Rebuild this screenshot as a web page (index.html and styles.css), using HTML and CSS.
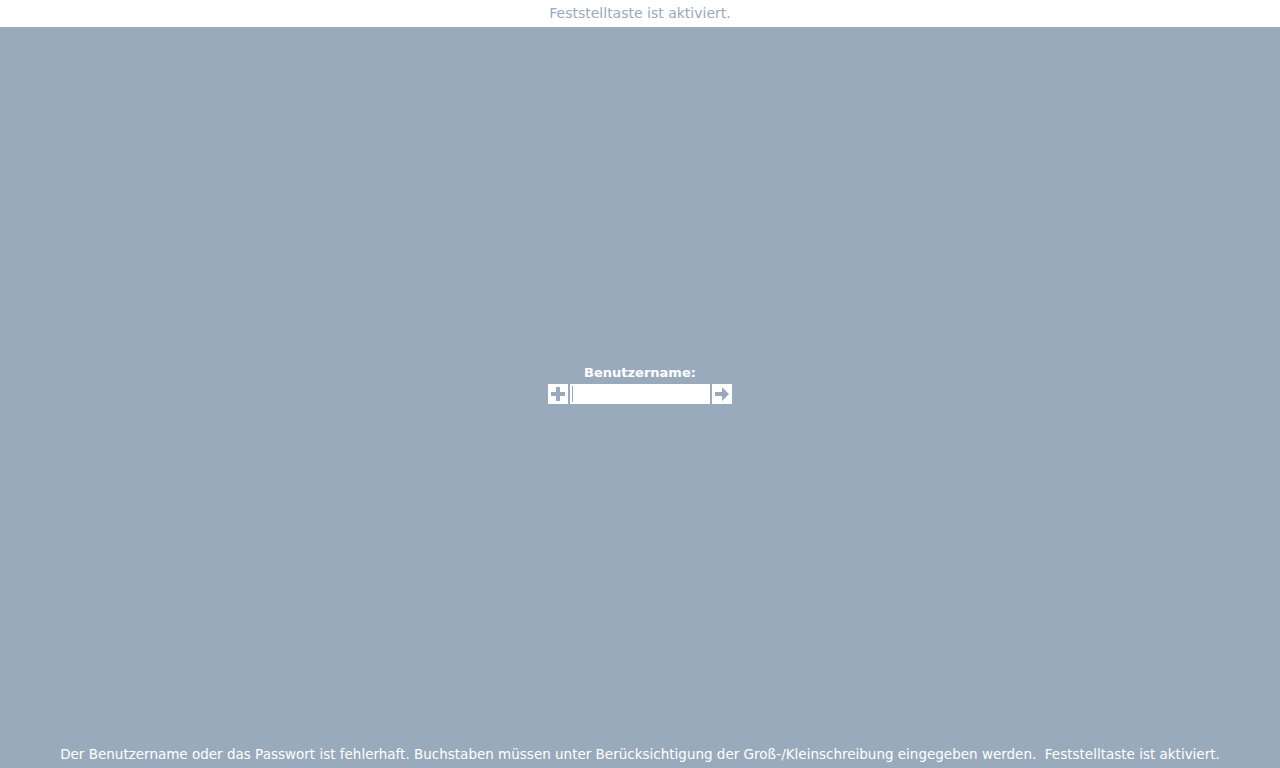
FILE: index.html
```html
<!DOCTYPE html>
<html lang="de">
<head>
<meta charset="utf-8">
<title>Anmeldung</title>
<link rel="stylesheet" href="styles.css">
</head>
<body>
<div class="page">
  <div class="topbar">Feststelltaste ist aktiviert.</div>
  <div class="main">
    <div class="login">
      <div class="label">Benutzername:</div>
      <div class="row">
        <button class="btn" type="button" aria-label="Optionen">
          <svg width="20" height="20" viewBox="0 0 20 20"><path d="M8 3h4v5h5v4h-5v5h-4v-5h-5v-4h5z" fill="#9aaabd"/></svg>
        </button>
        <div class="input"><span class="caret"></span></div>
        <button class="btn" type="button" aria-label="Weiter">
          <svg width="20" height="20" viewBox="0 0 20 20"><path d="M3 8h7v-5l7 7-7 7v-5h-7z" fill="#9aaabd"/></svg>
        </button>
      </div>
    </div>
  </div>
  <div class="message">Der Benutzername oder das Passwort ist fehlerhaft. Buchstaben müssen unter Berücksichtigung der Groß-/Kleinschreibung eingegeben werden.&nbsp; Feststelltaste ist aktiviert.</div>
</div>
</body>
</html>
```
FILE: styles.css
```css
html, body {
  margin: 0;
  padding: 0;
  height: 100%;
}
body {
  background: #9aaabd;
  font-family: "DejaVu Sans", sans-serif;
}
.page {
  height: 768px;
  display: flex;
  flex-direction: column;
}
.topbar {
  height: 27px;
  background: #ffffff;
  color: #9aaabd;
  font-size: 14px;
  line-height: 27px;
  text-align: center;
}
.main {
  flex: 1;
  display: flex;
  align-items: flex-start;
  justify-content: center;
  padding-top: 338px;
}
.login {
  display: flex;
  flex-direction: column;
  align-items: center;
}
.label {
  color: #ffffff;
  font-weight: bold;
  font-size: 13px;
  line-height: 16px;
  margin-bottom: 3px;
}
.row {
  display: flex;
  gap: 2px;
}
.btn {
  width: 20px;
  height: 20px;
  padding: 0;
  border: none;
  background: #ffffff;
  display: block;
}
.btn svg {
  display: block;
}
.input {
  width: 140px;
  height: 20px;
  background: #ffffff;
  display: flex;
  align-items: center;
}
.caret {
  width: 1px;
  height: 16px;
  margin-left: 2px;
  background: #9aaabd;
}
.message {
  color: #ffffff;
  font-size: 13.5px;
  line-height: 28px;
  text-align: center;
}
```
